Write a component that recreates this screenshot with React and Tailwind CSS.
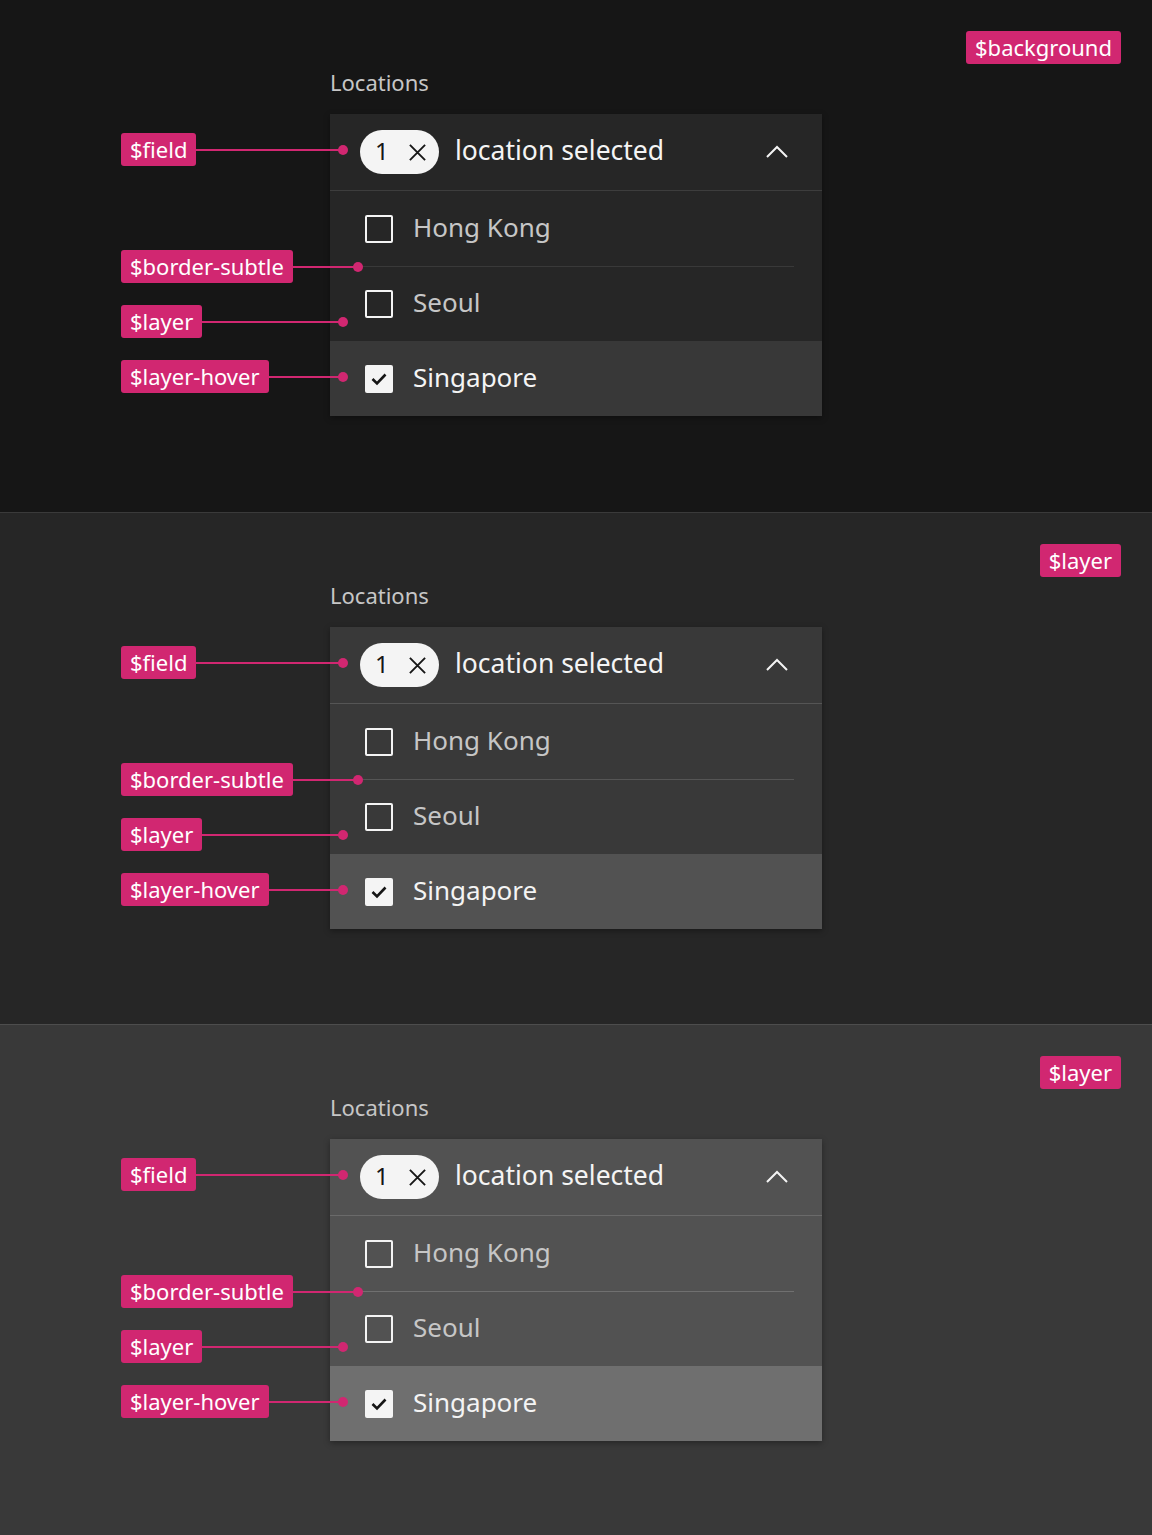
import React from "react";

const FONT = { fontFamily: '"Noto Sans", "Open Sans", sans-serif' };

function Tag({ children }) {
  return (
    <div className="h-[33px] px-[9px] flex items-center rounded-[3px] bg-[#d12771] text-white text-[22px] leading-none whitespace-nowrap">
      <span className="pb-[2px]">{children}</span>
    </div>
  );
}

function Pointer({ label, className }) {
  return (
    <div className={"absolute left-[121px] z-10 flex items-center " + className}>
      <Tag>{label}</Tag>
      <div className="flex-1 h-[2px] bg-[#d12771]" />
      <div className="w-[10px] h-[10px] rounded-full bg-[#d12771] -ml-[5px]" />
    </div>
  );
}

function CloseIcon() {
  return (
    <svg viewBox="0 0 20 20" className="w-[19px] h-[19px]" fill="none" stroke="#161616" strokeWidth="2">
      <path d="M2 2 L18 18 M18 2 L2 18" />
    </svg>
  );
}

function ChevronUp() {
  return (
    <svg viewBox="0 0 24 24" className="w-[24px] h-[24px]" fill="none" stroke="#f4f4f4" strokeWidth="2">
      <path d="M2 17 L12 7 L22 17" />
    </svg>
  );
}

function Checkbox({ checked }) {
  if (checked) {
    return (
      <div className="w-[28px] h-[28px] rounded-[2px] bg-[#f4f4f4] flex items-center justify-center shrink-0">
        <svg viewBox="0 0 28 28" className="w-[28px] h-[28px]" fill="none" stroke="#161616" strokeWidth="2.6">
          <path d="M7.5 14 L12 18.5 L20.5 9.5" />
        </svg>
      </div>
    );
  }
  return <div className="w-[28px] h-[28px] rounded-[2px] border-2 border-[#f4f4f4] shrink-0" />;
}

function Dropdown({ v }) {
  const items = [
    { name: "Hong Kong", checked: false, hover: false, first: true },
    { name: "Seoul", checked: false, hover: false, first: false },
    { name: "Singapore", checked: true, hover: true, first: false },
  ];
  return (
    <div className={"w-[492px] shadow-[0_2px_6px_rgba(0,0,0,0.35)] " + v.layer}>
      <div className={"h-[77px] flex items-center pl-[30px] pr-[33px] border-b " + v.fieldBorder}>
        <div className="w-[79px] h-[44px] rounded-full bg-[#f4f4f4] flex items-center pl-[15px] gap-[19px] text-[#161616]">
          <span className="text-[24px] leading-none pb-[2px]">1</span>
          <CloseIcon />
        </div>
        <span className="ml-[16px] text-[26.5px] text-[#f4f4f4] leading-none flex-1 pb-[4px]">location selected</span>
        <ChevronUp />
      </div>
      {items.map((it) => (
        <div key={it.name} className={"h-[75px] px-[28px] " + (it.hover ? v.hover : "")}>
          <div
            className={
              "h-full flex items-center pl-[7px] gap-[20px] border-t " +
              (it.first || it.hover ? "border-transparent" : v.border)
            }
          >
            <Checkbox checked={it.checked} />
            <span className={"text-[26px] leading-none pb-[4px] " + (it.hover ? "text-[#f4f4f4]" : "text-[#c6c6c6]")}>
              {it.name}
            </span>
          </div>
        </div>
      ))}
    </div>
  );
}

function Section({ v, tag, className }) {
  return (
    <div className={"relative h-[512px] " + v.bg + " " + className}>
      <div className="absolute right-[31px] top-[31px]">
        <Tag>{tag}</Tag>
      </div>
      <div className="pl-[330px] pt-[67px] flex flex-col">
        <div className="text-[22px] leading-[30px] text-[#c6c6c6] mb-[17px]">Locations</div>
        <Dropdown v={v} />
      </div>
      <Pointer label="$field" className="top-[133px] w-[227px]" />
      <Pointer label="$border-subtle" className="top-[250px] w-[242px]" />
      <Pointer label="$layer" className="top-[305px] w-[227px]" />
      <Pointer label="$layer-hover" className="top-[360px] w-[227px]" />
    </div>
  );
}

const V1 = {
  bg: "bg-[#161616]",
  layer: "bg-[#262626]",
  hover: "bg-[#383838]",
  border: "border-[#393939]",
  fieldBorder: "border-[#3d3d3d]",
};
const V2 = {
  bg: "bg-[#262626]",
  layer: "bg-[#393939]",
  hover: "bg-[#525252]",
  border: "border-[#555555]",
  fieldBorder: "border-[#555555]",
};
const V3 = {
  bg: "bg-[#393939]",
  layer: "bg-[#525252]",
  hover: "bg-[#6f6f6f]",
  border: "border-[#707070]",
  fieldBorder: "border-[#6a6a6a]",
};

export default function App() {
  return (
    <div className="w-[1152px] h-[1535px] overflow-hidden bg-[#393939]" style={FONT}>
      <Section v={V1} tag="$background" />
      <Section v={V2} tag="$layer" className="border-t border-[#3a3a3a]" />
      <Section v={V3} tag="$layer" className="border-t border-[#4d4d4d]" />
    </div>
  );
}
